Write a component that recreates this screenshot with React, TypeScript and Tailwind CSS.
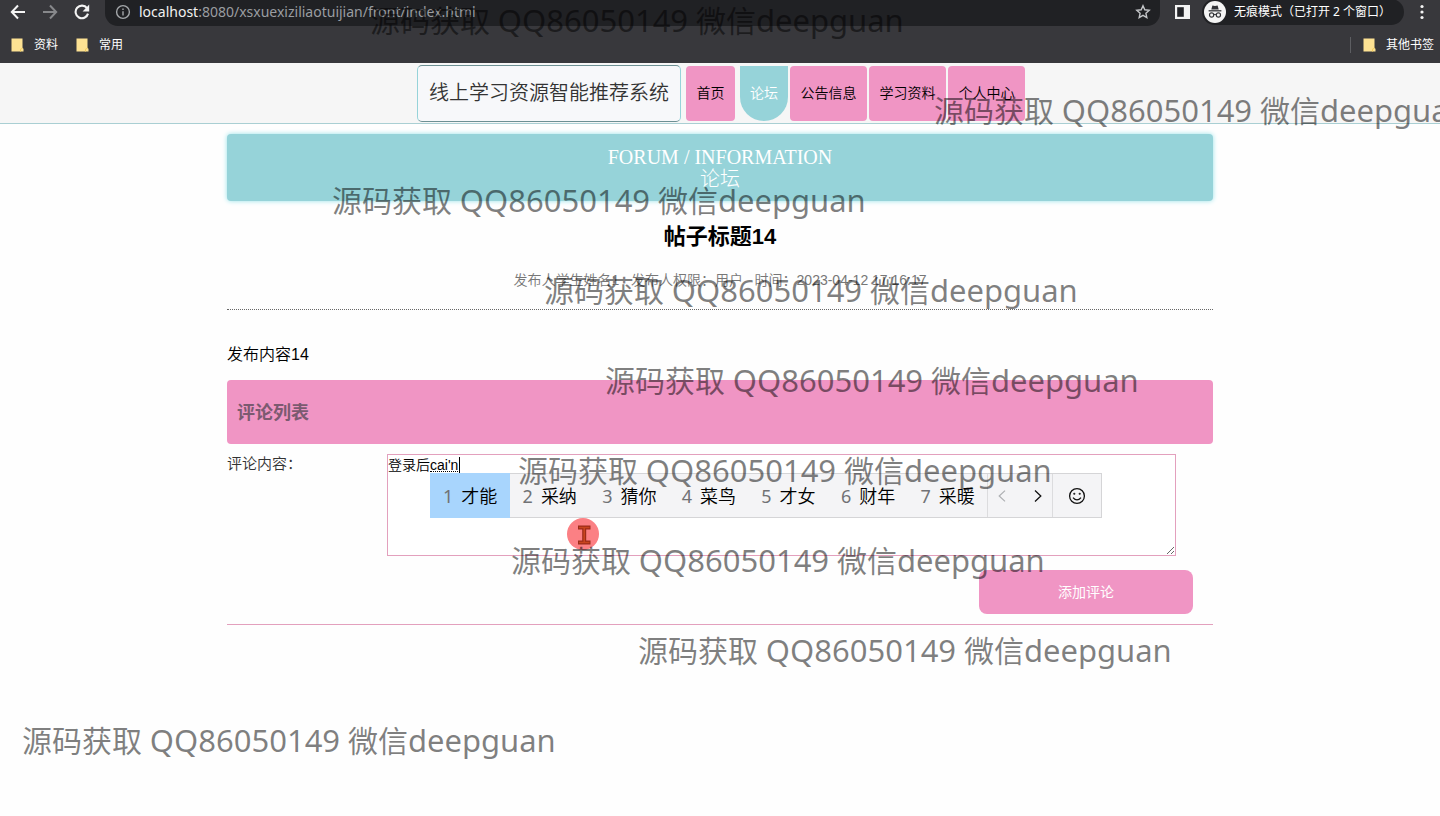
import type { ReactNode } from "react";

const ui = "font-['Noto_Sans','Noto_Sans_CJK_SC',sans-serif]";
const arial = "font-['Liberation_Sans','Noto_Sans_CJK_SC',sans-serif]";

function FolderIcon() {
  return (
    <svg width="13" height="14" viewBox="0 0 13 14" aria-hidden="true">
      <path d="M0.5 0.5h11v9.5l1 .8v2.7H0.5z" fill="#fde293" />
      <path d="M9.5 13.5v-2.3l2-1" fill="none" stroke="#f3cd5d" strokeWidth="1" />
    </svg>
  );
}

function Bookmark({ children }: { children: ReactNode }) {
  return (
    <a href="#" className="flex items-center gap-[10px] text-xs text-white">
      <FolderIcon />
      {children}
    </a>
  );
}

function Browser() {
  return (
    <div className={`${ui} h-[63px] overflow-hidden bg-[#38383c]`}>
      <div className="flex h-[26px] items-start">
        <div className="flex h-6 w-[105px] shrink-0 items-center gap-4 pl-[10px]">
          <button aria-label="后退">
            <svg width="16" height="16" viewBox="0 0 16 16" fill="none" stroke="#f4f4f4" strokeWidth="2">
              <path d="M15 8H2M8 1.5 1.8 8 8 14.5" />
            </svg>
          </button>
          <button aria-label="前进">
            <svg width="16" height="16" viewBox="0 0 16 16" fill="none" stroke="#87888b" strokeWidth="2">
              <path d="M1 8h13M8 1.5 14.2 8 8 14.5" />
            </svg>
          </button>
          <button aria-label="刷新">
            <svg width="16" height="16" viewBox="0 0 16 16">
              <path d="M13 4.2A6.3 6.3 0 1 0 14 9.6" fill="none" stroke="#f4f4f4" strokeWidth="2.1" />
              <path d="M15.2 0.6v6.8H8.6z" fill="#f4f4f4" />
            </svg>
          </button>
        </div>
        <div className="flex h-[26px] min-w-0 flex-1 items-center rounded-b-[13px] bg-[#202124] pr-[9px] pb-[2px] pl-[10px]">
          <svg width="16" height="16" viewBox="0 0 16 16" fill="none" stroke="#a5a8ab" strokeWidth="1.4" aria-hidden="true">
            <circle cx="8" cy="8" r="6.4" />
            <path d="M8 7.2v4.2M8 4.4v1.5" />
          </svg>
          <span className="ml-2 flex-1 text-sm text-[#9a9da1]">
            <span className="text-[#f1f1f1]">localhost</span>:8080/xsxuexiziliaotuijian/front/index.html
          </span>
          <button aria-label="收藏">
            <svg width="16" height="16" viewBox="0 0 16 16" fill="none" stroke="#c3c5c8" strokeWidth="1.4">
              <path d="m8 1.8 1.8 4 4.4.5-3.3 2.9.9 4.3L8 11.3l-3.8 2.2.9-4.3L1.8 6.3l4.4-.5z" />
            </svg>
          </button>
        </div>
        <div className="flex h-6 shrink-0 items-center pl-[15px]">
          <button aria-label="侧边栏">
            <svg width="15" height="14" viewBox="0 0 15 14">
              <path d="M0 0h15v14H0z" fill="#f4f4f4" />
              <path d="M2.2 2.2h6.6v9.6H2.2z" fill="#232428" />
            </svg>
          </button>
          <div className="ml-3 flex h-[26px] items-center gap-2 rounded-full bg-[#202124] pr-[13px] pl-[2px] text-xs whitespace-nowrap text-white">
            <svg width="22" height="22" viewBox="0 0 22 22" aria-hidden="true">
              <circle cx="11" cy="11" r="11" fill="#f4f4f4" />
              <path d="M7.3 8.6 8.4 4.4l2.6.5 2.6-.5 1.1 4.2z" fill="#333438" />
              <path d="M4.6 9.8h12.8" stroke="#333438" strokeWidth="1.3" />
              <g fill="none" stroke="#333438" strokeWidth="1.2">
                <circle cx="7.6" cy="14" r="2.1" />
                <circle cx="14.4" cy="14" r="2.1" />
                <path d="M9.7 13.7q1.3-.9 2.6 0" />
              </g>
            </svg>
            <span>无痕模式（已打开 2 个窗口）</span>
          </div>
          <button aria-label="菜单" className="mx-4">
            <svg width="4" height="16" viewBox="0 0 4 16" fill="#f4f4f4">
              <circle cx="2" cy="2.5" r="1.6" />
              <circle cx="2" cy="8" r="1.6" />
              <circle cx="2" cy="13.5" r="1.6" />
            </svg>
          </button>
        </div>
      </div>
      <div className="flex h-[37px] items-center gap-[18px] pr-[6px] pl-[11px]">
        <Bookmark>资料</Bookmark>
        <Bookmark>常用</Bookmark>
        <div className="ml-auto flex items-center border-l border-[#5d5e62] pl-3">
          <Bookmark>其他书签</Bookmark>
        </div>
      </div>
    </div>
  );
}

const navBase = "flex h-[55px] items-center justify-center text-sm font-[350]";

function NavLink({ children, wide = false }: { children: ReactNode; wide?: boolean }) {
  return (
    <a href="#" className={`${navBase} rounded bg-[#f095c4] text-black ${wide ? "w-[77px]" : "w-[49px]"}`}>
      {children}
    </a>
  );
}

function SiteHeader() {
  return (
    <header className="border-b border-[#a9cfd3] bg-[#f6f6f6]">
      <nav className="flex h-[60px] items-center justify-center gap-[2px] pl-[2px]">
        <div className="flex items-center gap-[5px]">
          <div className="flex h-[57px] w-[264px] items-center justify-center rounded-[5px] border border-x-[#96d3d9] border-y-[#6d9093] bg-[#f7f8fa] text-xl font-[350] text-[#333]">
            线上学习资源智能推荐系统
          </div>
          <NavLink>首页</NavLink>
          <a href="#" className={`${navBase} w-12 rounded-b-full bg-[#96d3d9] text-white`}>
            论坛
          </a>
        </div>
        <NavLink wide>公告信息</NavLink>
        <NavLink wide>学习资料</NavLink>
        <NavLink wide>个人中心</NavLink>
      </nav>
    </header>
  );
}

const candidates = ["才能", "采纳", "猜你", "菜鸟", "才女", "财年", "采暖"];

function CandidateBar() {
  return (
    <div className={`${ui} absolute top-[19px] left-[43px] flex h-[45px] border border-[#d5d5d7] bg-[#f4f4f6] text-lg text-black`}>
      <ol className="-my-px -ml-px flex w-[557px]">
        {candidates.map((word, i) => (
          <li
            key={word}
            className={`flex flex-1 items-center gap-2 pl-[13px] ${i === 0 ? "bg-[#a8d5fd]" : "border-y border-[#d5d5d7]"}`}
          >
            <span className="text-[#717275]">{i + 1}</span>
            <span className="font-[350]">{word}</span>
          </li>
        ))}
      </ol>
      <div className="flex w-[66px] items-center justify-between border-x border-[#dcdcde] px-[10px]">
        <button aria-label="上一页">
          <svg width="8" height="12" viewBox="0 0 8 12" fill="none" stroke="#aeb0b3" strokeWidth="1.2">
            <path d="M7 .6 1.2 6 7 11.4" />
          </svg>
        </button>
        <button aria-label="下一页">
          <svg width="8" height="12" viewBox="0 0 8 12" fill="none" stroke="#111" strokeWidth="1.3">
            <path d="M1 .6 6.8 6 1 11.4" />
          </svg>
        </button>
      </div>
      <button aria-label="表情" className="flex w-12 items-center justify-center">
        <svg width="18" height="18" viewBox="0 0 18 18" fill="none" stroke="#111" strokeWidth="1.3">
          <circle cx="9" cy="9" r="7.4" />
          <path d="M5 10.6q4 4.6 8 0" />
          <circle cx="6.3" cy="6.7" r=".4" fill="#111" />
          <circle cx="11.7" cy="6.7" r=".4" fill="#111" />
        </svg>
      </button>
    </div>
  );
}

function PointerMark() {
  return (
    <svg width="32" height="32" viewBox="0 0 32 32" className="absolute top-16 left-[180px]" aria-hidden="true">
      <circle cx="16" cy="16" r="16" fill="#fb8084" />
      <path d="M11 9.5h12.5M11 24.5h12.5M17.2 9.5v15" fill="none" stroke="#9c2b18" strokeWidth="4" />
      <path d="M12 9.5h10.5M12 24.5h10.5M17.2 9.5v15" fill="none" stroke="#c8451f" strokeWidth="1.6" />
    </svg>
  );
}

const marks = [
  "left-[370px] top-0",
  "left-[934px] top-[90px]",
  "left-[332px] top-[180px]",
  "left-[544px] top-[270px]",
  "left-[605px] top-[360px]",
  "left-[518px] top-[450px]",
  "left-[511px] top-[540px]",
  "left-[638px] top-[630px]",
  "left-[22px] top-[720px]",
];

function Watermarks() {
  return (
    <div className={`${ui} pointer-events-none absolute inset-0 overflow-hidden text-[30px] leading-10 text-black/50`}>
      {marks.map((place) => (
        <div key={place} className={`absolute whitespace-nowrap ${place}`}>
          源码获取 <span className="text-[31px]">QQ86050149</span> 微信
          <span className="text-[31px]">deepguan</span>
        </div>
      ))}
    </div>
  );
}

export default function App() {
  return (
    <div className={`${arial} relative min-h-screen overflow-hidden bg-[#fefefe] text-black`}>
      <Browser />
      <SiteHeader />
      <main className="mx-auto mt-[10px] max-w-[986px]">
        <div className="flex h-[67px] flex-col items-center justify-center rounded bg-[#96d3d9] font-['Liberation_Serif','Noto_Sans_CJK_SC',serif] text-xl leading-[22px] text-white shadow-[0_0_5px_#96e3ea]">
          <span>FORUM / INFORMATION</span>
          <span className="font-light">论坛</span>
        </div>
        <h1 className="mt-5 text-center text-[22px] leading-8 font-bold">帖子标题14</h1>
        <p className="mt-[15px] text-center text-sm leading-6 font-[350] whitespace-pre text-[#777]">
          {"发布人学生姓名1   发布人权限：用户   时间：2023-04-12 17:16:17"}
        </p>
        <div className="mt-[17px] border-t border-dotted border-[#666]" />
        <p className="mt-[33px] text-base leading-6 font-[350]">发布内容14</p>
        <h2 className="mt-[13px] flex h-16 items-center rounded bg-[#f095c4] px-[10px] pt-[2px] text-lg font-bold text-[#7b5a70]">
          评论列表
        </h2>
        <form className="mt-[10px] border-b border-[#e3a0bd] pb-[10px]" onSubmit={(e) => e.preventDefault()}>
          <div className="flex items-start">
            <label htmlFor="comment" className="w-40 shrink-0 text-[15px] leading-5 font-[350] text-[#333]">
              评论内容：
            </label>
            <div className="relative mr-[37px] flex-1">
              <textarea
                id="comment"
                defaultValue="登录后cai'n"
                className="block h-[102px] w-full border border-[#e3a0bd] bg-white text-sm leading-5 font-[350] outline-none"
              />
              <span className="absolute top-[17px] left-[43px] w-7 border-b border-dotted border-black" />
              <span className="absolute top-[3px] left-[72px] h-4 w-px bg-black" />
              <CandidateBar />
              <PointerMark />
            </div>
          </div>
          <div className="mt-[14px] flex justify-end pr-5">
            <button className="h-11 w-[214px] rounded-lg bg-[#f095c4] text-sm text-white">添加评论</button>
          </div>
        </form>
      </main>
      <Watermarks />
    </div>
  );
}
